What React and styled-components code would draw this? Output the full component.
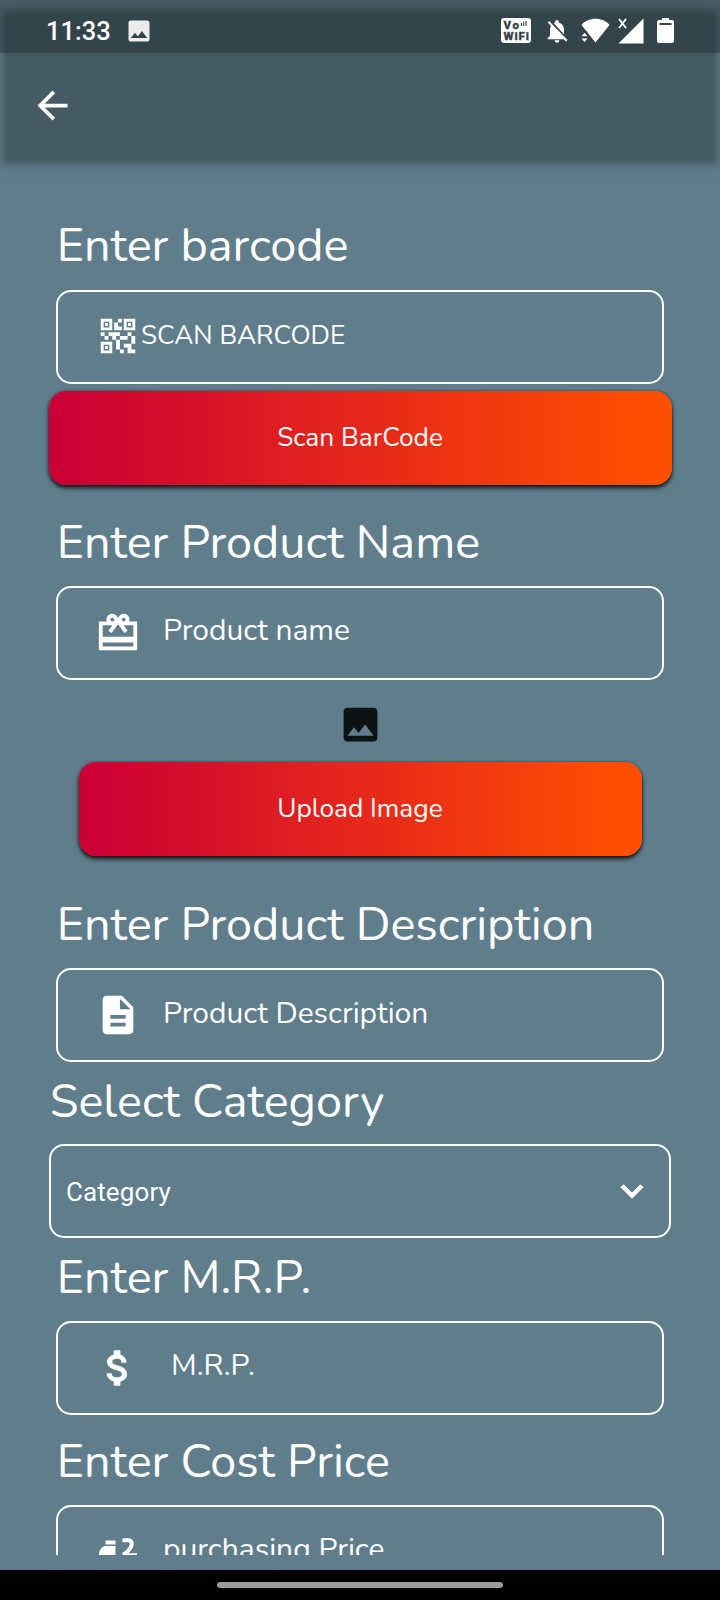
import React from "react";
import styled, { createGlobalStyle, css } from "styled-components";
import {
  MdArrowBack,
  MdAttachMoney,
  MdDescription,
  MdExpandMore,
  MdImage,
  MdNotificationsOff,
  MdQrCode2,
} from "react-icons/md";

const GlobalStyle = createGlobalStyle`
  * { box-sizing: border-box; }
  body { margin: 0; background: #607d8b; }
`;

const rounded = css`
  font-family: Nunito, Lato, sans-serif;
  font-weight: 400;
  font-variant-ligatures: none;
  white-space: nowrap;
`;

const heavier = css`
  path:not([fill="none"]) {
    stroke: #fff;
    stroke-width: 0.5px;
  }
`;

const DollarIcon = styled(MdAttachMoney)`${heavier}`;
const ChevronIcon = styled(MdExpandMore)`${heavier}`;

const Screen = styled.div`
  position: relative;
  display: flex;
  flex-direction: column;
  width: 720px;
  height: 1600px;
  overflow: hidden;
  background: #607d8b;
  color: #fff;
`;

const StatusBar = styled.div`
  position: absolute;
  inset: 0 0 auto 0;
  height: 53px;
  padding: 8px 46px 0 46px;
  display: flex;
  align-items: center;
  background: rgba(0, 0, 0, 0.25);
`;

const Clock = styled.span`
  font: 500 25.5px/30px Roboto, sans-serif;
  width: 78.5px;
`;

const StatusIcons = styled.div`
  display: flex;
  align-items: center;
  margin-left: auto;
  height: 26px;
`;

const Glyph = styled.svg`
  display: block;
  margin-left: ${({ $gap = 0 }) => $gap}px;
`;

const AppBar = styled.header`
  flex: none;
  height: 145px;
  margin: 14px 7px 2px;
  padding: 38px 0 0 23px;
  display: flex;
  align-items: center;
  background: #455b63;
  box-shadow: 0 0 6px 4px #455b63, 0 2px 16px 5px rgba(69, 90, 100, 0.4);
`;

const BackButton = styled.button`
  display: flex;
  padding: 0;
  border: 0;
  background: none;
  color: #fff;
  font-size: 45px;
`;

const Form = styled.main`
  flex: none;
  height: 1394px;
  padding-top: 50px;
  overflow: hidden;
`;

const Section = styled.section`
  margin: ${({ $top = 0 }) => $top}px ${({ $wide }) => ($wide ? 49 : 56)}px 0;
`;

const Heading = styled.h2`
  ${rounded}
  margin: 0;
  padding: ${({ $lift = 0 }) => 2.5 - $lift}px 0 ${({ $lift = 0 }) => 10 + $lift}px 0.7px;
  font-size: 46.8px;
  line-height: 66px;
`;

const Field = styled.div`
  display: flex;
  align-items: center;
  height: 94px;
  padding-left: ${({ $pad = 37 }) => $pad}px;
  padding-right: 15px;
  border: 2px solid #fff;
  border-radius: 15px;
  font-size: 46px;
  svg { flex: none; }
`;

const LeadingCode = styled.span`
  display: flex;
  padding-bottom: 2px;
`;

const Placeholder = styled.span`
  ${rounded}
  font-size: ${({ $size = 30 }) => $size}px;
  margin-left: ${({ $gap = 22 }) => $gap}px;
  padding-bottom: ${({ $lift = 3.6 }) => $lift}px;
`;

const Selected = styled.span`
  flex: 1;
  padding-top: 1px;
  font: 400 26px/30px Roboto, sans-serif;
  letter-spacing: 0.1px;
`;

const GradientButton = styled.button`
  ${rounded}
  display: flex;
  align-items: center;
  justify-content: center;
  width: ${({ $width }) => $width}px;
  height: 94px;
  margin: ${({ $top }) => $top}px auto 0;
  padding: 0 0 ${({ $lift = 1 }) => $lift}px;
  border: 0;
  border-radius: 17px;
  background: linear-gradient(90deg, #cb0035 2%, #ff5000 98%);
  box-shadow: 0 3px 4px rgba(0, 0, 0, 0.8), 0 0 3px rgba(0, 0, 0, 0.4);
  color: #fff;
  font-size: 26.3px;
`;

const Preview = styled.div`
  display: flex;
  justify-content: center;
  margin-top: 22px;
  font-size: 45px;
  color: #0d1214;
`;

const NavBar = styled.nav`
  flex: none;
  display: flex;
  justify-content: center;
  height: 30px;
  margin-top: auto;
  padding-top: 12px;
  background: #000;
`;

const Pill = styled.div`
  width: 286px;
  height: 6px;
  border-radius: 3px;
  background: #999;
`;

function StatusGlyphs() {
  return (
    <StatusIcons>
      <Glyph width="30" height="25" viewBox="0 0 30 25">
        <rect width="30" height="25" rx="3" fill="#fff" />
        <g
          fill="#35444b"
          stroke="#35444b"
          strokeWidth="0.3"
          fontFamily="Roboto, sans-serif"
          fontWeight="900"
          fontSize="11.5"
        >
          <text x="2.5" y="11" textLength="15.5" lengthAdjust="spacing">Vo</text>
          <text x="2.5" y="21.5" textLength="25.5" lengthAdjust="spacing">WiFi</text>
        </g>
        <path d="M20.5 5v3M22.7 3.5v4.5M25 3v5" stroke="#35444b" strokeWidth="1.1" />
      </Glyph>
      <Glyph as={MdNotificationsOff} $gap={12} size={28} />
      <Glyph $gap={10} width="29" height="25" viewBox="0 0 29 25" fill="#fff">
        <path d="M0.5 7C7-1.3 22-1.3 28.5 7L14.5 24.5z" />
        <path d="M-1 13.5h7.5v11h-7.5z" fill="#35444b" />
        <path d="M0.5 18.3l3-3.6 3 3.6zM0.5 20.4h6l-3 3.6z" />
      </Glyph>
      <Glyph $gap={8} width="26" height="26" viewBox="0 0 26 26">
        <path d="M25.5 0.5v25H0.5z" fill="#fff" />
        <path d="M1 1l7 9M8 1L1 10" stroke="#fff" strokeWidth="1.9" />
      </Glyph>
      <Glyph $gap={13} width="17" height="25" viewBox="0 0 17 25">
        <path d="M5 0h7v2h3a2 2 0 0 1 2 2v19a2 2 0 0 1-2 2H2a2 2 0 0 1-2-2V4a2 2 0 0 1 2-2h3z" fill="#fff" />
        <path d="M2.5 6h12" stroke="#35444b" strokeWidth="2" />
      </Glyph>
    </StatusIcons>
  );
}

function GiftIcon() {
  return (
    <svg width="46" height="46" viewBox="0 0 24 24" fill="#fff">
      <path d="M22 6h-4.18c.11-.31.18-.65.18-1 0-1.66-1.34-3-3-3-1.05 0-1.96.54-2.5 1.35l-.5.67-.5-.68C10.96 2.54 10.05 2 9 2 7.34 2 6 3.34 6 5c0 .35.07.69.18 1H2v15h20V6zm-7-2c.55 0 1 .45 1 1s-.45 1-1 1-1-.45-1-1 .45-1 1-1zM9 4c.55 0 1 .45 1 1s-.45 1-1 1-1-.45-1-1 .45-1 1-1zm11 15H4v-2h16v2zm0-5H4V8h5.08L7 10.83 8.62 12 11 8.76l1-1.36 1 1.36L15.38 12 17 10.83 14.92 8H20v6z" />
    </svg>
  );
}

function PriceIcon() {
  return (
    <svg width="46" height="46" viewBox="0 0 46 46" fill="#fff">
      <path d="M10.500 11.500h10v4h-10zM9.500 17h11v15H4v-6c0-4 2-7.500 5.500-9z" />
      <path d="M27.500 11.300h5.500c4.500 0 4.500 4 2.500 7.500-1.500 2.600-3 4-6 6v1.500h12.500" fill="none" stroke="#fff" strokeWidth="4" />
    </svg>
  );
}

export default function App() {
  return (
    <Screen>
      <GlobalStyle />
      <AppBar>
        <BackButton aria-label="Back">
          <MdArrowBack />
        </BackButton>
      </AppBar>
      <StatusBar>
        <Clock>11:33</Clock>
        <MdImage size={28} color="#ececec" />
        <StatusGlyphs />
      </StatusBar>

      <Form>
        <Section>
          <Heading $lift={1}>Enter barcode</Heading>
          <Field>
            <LeadingCode>
              <MdQrCode2 />
            </LeadingCode>
            <Placeholder $size={26.2} $gap={0} $lift={2.5}>SCAN BARCODE</Placeholder>
          </Field>
        </Section>
        <GradientButton $width={623} $top={7.5} $lift={2.5}>Scan BarCode</GradientButton>

        <Section $top={22}>
          <Heading>Enter Product Name</Heading>
          <Field>
            <GiftIcon />
            <Placeholder>Product name</Placeholder>
          </Field>
        </Section>
        <Preview>
          <MdImage />
        </Preview>
        <GradientButton $width={563} $top={15}>Upload Image</GradientButton>

        <Section $top={33.5}>
          <Heading>Enter Product Description</Heading>
          <Field>
            <MdDescription />
            <Placeholder $lift={2.2}>Product Description</Placeholder>
          </Field>
        </Section>

        <Section $top={4} $wide>
          <Heading $lift={-0.5}>Select Category</Heading>
          <Field $pad={15}>
            <Selected>Category</Selected>
            <ChevronIcon size={44} />
          </Field>
        </Section>

        <Section $top={4}>
          <Heading>Enter M.R.P.</Heading>
          <Field>
            <DollarIcon />
            <Placeholder $gap={30}>M.R.P.</Placeholder>
          </Field>
        </Section>

        <Section $top={11.5}>
          <Heading>Enter Cost Price</Heading>
          <Field>
            <PriceIcon />
            <Placeholder>purchasing Price</Placeholder>
          </Field>
        </Section>
      </Form>

      <NavBar>
        <Pill />
      </NavBar>
    </Screen>
  );
}
